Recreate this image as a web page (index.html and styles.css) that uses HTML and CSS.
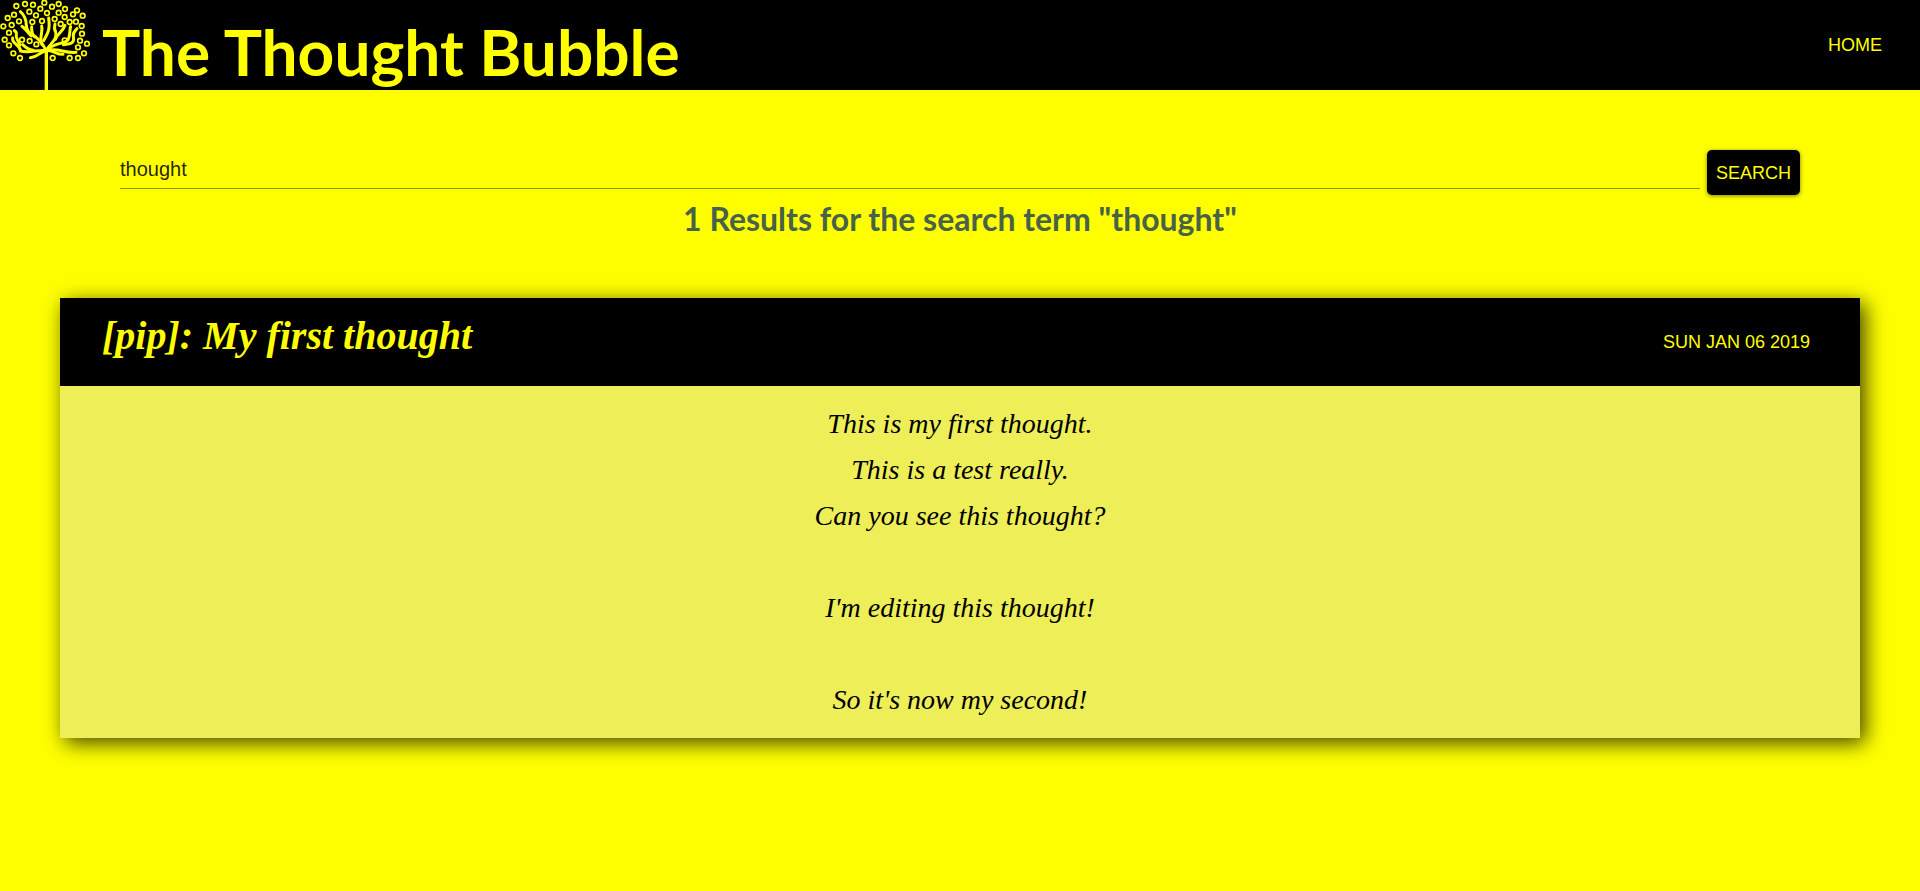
FILE: index.html
```
<!DOCTYPE html>
<html lang="en">
<head>
<meta charset="utf-8">
<title>The Thought Bubble</title>
<link rel="stylesheet" href="styles.css">
</head>
<body>
<header class="site-header">
  <svg class="logo" viewBox="0 0 270 270" aria-hidden="true">
    <g class="branches">
      <path class="trunk" d="M139 270V150"/>
      <path d="M137 152C130 130 118 120 106 110C88 100 82 96 79 78C79 58 72 44 61 35"/>
      <path d="M94 108C84 99 78 86 66 79"/>
      <path d="M104 111C94 102 95 92 95 80"/>
      <path d="M126 134C116 112 130 96 125 78"/>
      <path d="M131 122C142 100 151 94 146 54"/>
      <path d="M139 150C158 124 172 116 167 96C162 88 163 80 165 72"/>
      <path d="M166 118C174 98 188 96 195 76"/>
      <path d="M139 152C164 126 190 134 204 120C212 104 208 90 212 80"/>
      <path d="M190 134C214 132 224 130 220 108C218 96 228 90 231 86"/>
      <path d="M139 152C114 148 88 160 62 153C60 132 34 132 38 114"/>
      <path d="M60 135C54 118 46 116 49 104C50 98 47 94 43 92"/>
      <path d="M100 151C84 150 76 142 68 134"/>
      <path d="M139 152C118 156 114 172 91 173"/>
      <path d="M139 152C158 148 168 164 189 163"/>
      <path d="M139 152C176 142 190 160 228 157"/>
    </g>
    <g class="leaves">
      <circle cx="49" cy="18" r="7"/><circle cx="75" cy="12" r="7"/><circle cx="99" cy="14" r="7"/><circle cx="133" cy="8" r="7"/><circle cx="156" cy="20" r="7"/><circle cx="176" cy="12" r="7"/><circle cx="195" cy="27" r="7"/><circle cx="231" cy="31" r="7"/><circle cx="248" cy="47" r="7"/><circle cx="219" cy="43" r="7"/><circle cx="176" cy="38" r="7"/><circle cx="194" cy="51" r="7"/><circle cx="164" cy="57" r="7"/><circle cx="182" cy="72" r="7"/><circle cx="209" cy="66" r="7"/><circle cx="228" cy="65" r="7"/><circle cx="245" cy="78" r="7"/><circle cx="246" cy="101" r="7"/><circle cx="240" cy="122" r="7"/><circle cx="261" cy="131" r="7"/><circle cx="234" cy="142" r="7"/><circle cx="252" cy="160" r="7"/><circle cx="234" cy="174" r="7"/><circle cx="209" cy="174" r="7"/><circle cx="158" cy="174" r="7"/><circle cx="194" cy="121" r="7"/><circle cx="141" cy="39" r="7"/><circle cx="121" cy="26" r="7"/><circle cx="108" cy="46" r="7"/><circle cx="88" cy="35" r="7"/><circle cx="126" cy="63" r="7"/><circle cx="97" cy="66" r="7"/><circle cx="57" cy="64" r="7"/><circle cx="42" cy="44" r="7"/><circle cx="23" cy="54" r="7"/><circle cx="35" cy="75" r="7"/><circle cx="10" cy="79" r="7"/><circle cx="27" cy="98" r="7"/><circle cx="14" cy="119" r="7"/><circle cx="27" cy="136" r="7"/><circle cx="40" cy="160" r="7"/><circle cx="60" cy="174" r="7"/><circle cx="66" cy="119" r="7"/><circle cx="89" cy="123" r="7"/><circle cx="109" cy="133" r="7"/>
    </g>
  </svg>
  <h1 class="site-title">The Thought Bubble</h1>
  <nav class="site-nav"><a class="nav-link" href="#">HOME</a></nav>
</header>
<main class="page">
  <form class="search">
    <input class="search-input" type="text" value="thought" aria-label="Search term">
    <button class="search-button" type="submit">SEARCH</button>
  </form>
  <h2 class="results">1 Results for the search term "thought"</h2>
  <article class="card">
    <header class="card-header">
      <h3 class="card-title">[pip]: My first thought</h3>
      <time class="card-date" datetime="2019-01-06">SUN JAN 06 2019</time>
    </header>
    <p class="card-body">This is my first thought.
This is a test really.
Can you see this thought?

I'm editing this thought!

So it's now my second!</p>
  </article>
</main>
</body>
</html>
```
FILE: styles.css
```
* { box-sizing: border-box; }
body {
  margin: 0;
  min-height: 100vh;
  background: #ff0;
  font-family: "Liberation Sans", Arial, sans-serif;
  font-size: 18px;
}
.site-header {
  display: flex;
  align-items: center;
  padding-right: 38px;
  background: #000;
  color: #ff0;
}
.logo { width: 90px; height: 90px; flex: none; }
.branches, .leaves { fill: none; stroke: #ff0; }
.branches { stroke-width: 9; stroke-linecap: round; }
.trunk { stroke-width: 10; stroke-linecap: butt; }
.leaves { stroke-width: 5; }
.site-title {
  margin: 0 0 0 12px;
  padding-top: 14px;
  font: 700 64px/72px Lato, sans-serif;
}
.site-nav { margin-left: auto; }
.nav-link { color: inherit; text-decoration: none; }
.page { padding: 60px 60px 0; }
.search {
  display: flex;
  align-items: flex-start;
  gap: 7px;
  padding: 0 60px;
}
.search-input {
  flex: 1;
  min-width: 0;
  height: 39px;
  padding: 0;
  border: 0;
  border-bottom: 1px solid rgba(0, 0, 0, .42);
  outline: 0;
  background: transparent;
  color: rgba(0, 0, 0, .87);
  font: 20px "Liberation Sans", Arial, sans-serif;
}
.search-button {
  height: 45px;
  padding: 2px 9px 0;
  border: 0;
  border-radius: 5px;
  background: #000;
  color: #ff0;
  box-shadow: 0 1px 4px rgba(0, 0, 0, .5);
  font: 18px "Liberation Sans", Arial, sans-serif;
}
.results {
  margin: 6px 0 0;
  color: #476249;
  font: 700 32px/36px Lato, sans-serif;
  text-align: center;
}
.card {
  margin-top: 61px;
  background: #eeef58;
  box-shadow: 5px 5px 20px rgba(0, 0, 0, .75);
}
.card-header {
  display: flex;
  align-items: center;
  justify-content: space-between;
  height: 88px;
  padding: 0 50px 0 42px;
  background: #000;
  color: #ff0;
}
.card-title {
  margin: 0;
  padding-bottom: 12px;
  font: italic 700 40px/48px "Liberation Serif", "Times New Roman", serif;
}
.card-body {
  margin: 0;
  padding: 15px;
  font: italic 28px/46px "Liberation Serif", "Times New Roman", serif;
  text-align: center;
  white-space: pre-line;
}
```
